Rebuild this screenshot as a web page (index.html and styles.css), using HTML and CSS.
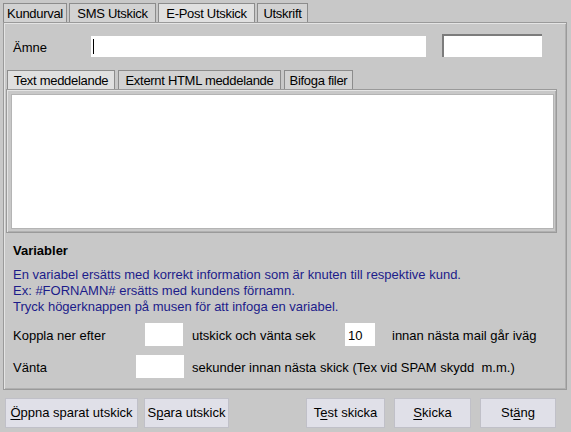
FILE: index.html
```html
<!DOCTYPE html>
<html lang="sv">
<head>
<meta charset="utf-8">
<title>E-Post Utskick</title>
<link rel="stylesheet" href="styles.css">
</head>
<body>
<div class="window">
  <div class="tabs">
    <div class="tab t1">Kundurval</div>
    <div class="tab t2">SMS Utskick</div>
    <div class="tab t3 active">E-Post Utskick</div>
    <div class="tab t4">Utskrift</div>
  </div>
  <div class="panel">
    <div class="subject-row">
      <span class="label">Ämne</span>
      <div class="input subject"><span class="caret"></span></div>
      <div class="input sunken"></div>
    </div>
    <div class="tabs inner-tabs">
      <div class="tab i1 active">Text meddelande</div>
      <div class="tab i2">Externt HTML meddelande</div>
      <div class="tab i3">Bifoga filer</div>
    </div>
    <div class="inner-panel">
      <div class="textarea"></div>
    </div>
    <div class="vars">
      <div class="vars-title">Variabler</div>
      <div class="vars-text">
        <div>En variabel ersätts med korrekt information som är knuten till respektive kund.</div>
        <div>Ex: #FORNAMN# ersätts med kundens förnamn.</div>
        <div>Tryck högerknappen på musen för att infoga en variabel.</div>
      </div>
      <div class="param-row row1">
        <span class="p-label l1">Koppla ner efter</span>
        <div class="box b1"></div>
        <span class="p-text t-a">utskick och vänta sek</span>
        <div class="box b2">10</div>
        <span class="p-text t-b">innan nästa mail går iväg</span>
      </div>
      <div class="param-row row2">
        <span class="p-label l2">Vänta</span>
        <div class="box b3"></div>
        <span class="p-text t-c">sekunder innan nästa skick (Tex vid SPAM skydd&nbsp; m.m.)</span>
      </div>
    </div>
  </div>
  <div class="buttons">
    <div class="btn bo"><u>Ö</u>ppna sparat utskick</div>
    <div class="btn bs">S<u>p</u>ara utskick</div>
    <div class="spacer"></div>
    <div class="btn bt">T<u>e</u>st skicka</div>
    <div class="btn bk"><u>S</u>kicka</div>
    <div class="btn bx">St<u>ä</u>ng</div>
  </div>
</div>
</body>
</html>
```
FILE: styles.css
```css
* { box-sizing: border-box; }
html, body { margin: 0; padding: 0; }
body {
  width: 571px;
  height: 432px;
  overflow: hidden;
  background: #c8c8c8;
  font-family: "Liberation Sans", Arial, sans-serif;
  font-size: 13px;
  color: #000;
}
.window {
  padding: 3px 4px 0 3px;
}
.tabs {
  display: flex;
  height: 19px;
  gap: 2px;
}
.tab {
  height: 19px;
  line-height: 19px;
  padding: 0;
  text-align: center;
  letter-spacing: -0.3px;
  border: 1px solid #8c8c8c;
  border-bottom: none;
  background: #d2d2d2;
  white-space: nowrap;
}
.tab.active { background: #e0e0e0; }
.t1 { width: 64px; }
.t2 { width: 87px; }
.t3 { width: 97px; }
.t4 { width: 51px; }

.panel {
  height: 368px;
  border: 1px solid #9a9a9a;
  box-shadow: inset 1px 1px 0 #e4e4e4, inset -1px -1px 0 #b0b0b0;
  padding: 11px 9px 0 2px;
}
.subject-row {
  display: flex;
  align-items: center;
  height: 23px;
  padding-left: 7px;
}
.label { width: 78px; padding-top: 3px; }
.input { background: #fff; height: 21px; }
.subject { width: 335px; margin-top: 2px; position: relative; }
.caret {
  position: absolute;
  left: 2px; top: 3px;
  width: 1px; height: 15px;
  background: #000;
}
.sunken {
  width: 100px;
  height: 23px;
  margin-left: 16px;
  border-top: 2px solid #7c7c7c;
  border-left: 2px solid #7c7c7c;
}
.inner-tabs {
  margin-top: 13px;
  padding-left: 1px;
  gap: 3px;
}
.i1 { width: 108px; }
.i2 { width: 163px; }
.i3 { width: 69px; }
.inner-panel {
  height: 144px;
  border: 1px solid #9a9a9a;
  box-shadow: inset 1px 1px 0 #e4e4e4, inset -1px -1px 0 #b0b0b0;
  padding: 4px 2px 3px 4px;
}
.textarea {
  height: 135px;
  background: #fff;
  border: 1px solid #b4b4b4;
}
.vars { padding-left: 7px; }
.vars-title {
  font-weight: bold;
  margin-top: 9px;
  line-height: 18px;
}
.vars-text {
  margin-top: 7px;
  color: #1c1c8a;
  line-height: 16px;
}
.param-row {
  display: flex;
  align-items: center;
  height: 23px;
}
.row1 { margin-top: 8px; }
.row2 { margin-top: 9px; }
.p-label, .p-text { padding-top: 1px; }
.box { background: #fff; height: 23px; }
.l1 { width: 132px; }
.b1 { width: 38px; }
.t-a { margin-left: 9px; width: 153px; }
.b2 { width: 30px; padding: 5px 0 0 3px; line-height: 15px; }
.t-b { margin-left: 17px; }
.l2 { width: 123px; }
.b3 { width: 48px; }
.t-c { margin-left: 8px; }

.buttons {
  display: flex;
  padding: 8px 11px 0 2px;
  gap: 6px;
}
.spacer { flex: 1; }
.btn {
  height: 30px;
  line-height: 28px;
  text-align: center;
  background: #e0e0e8;
  border: 1px solid #c0c0c8;
  white-space: nowrap;
}
.btn u { text-decoration: underline; text-underline-offset: 2px; }
.bo { width: 133px; }
.bs { width: 85px; }
.bt { width: 79px; margin-right: 3px; }
.bk { width: 77px; margin-right: 3px; }
.bx { width: 76px; }
```
